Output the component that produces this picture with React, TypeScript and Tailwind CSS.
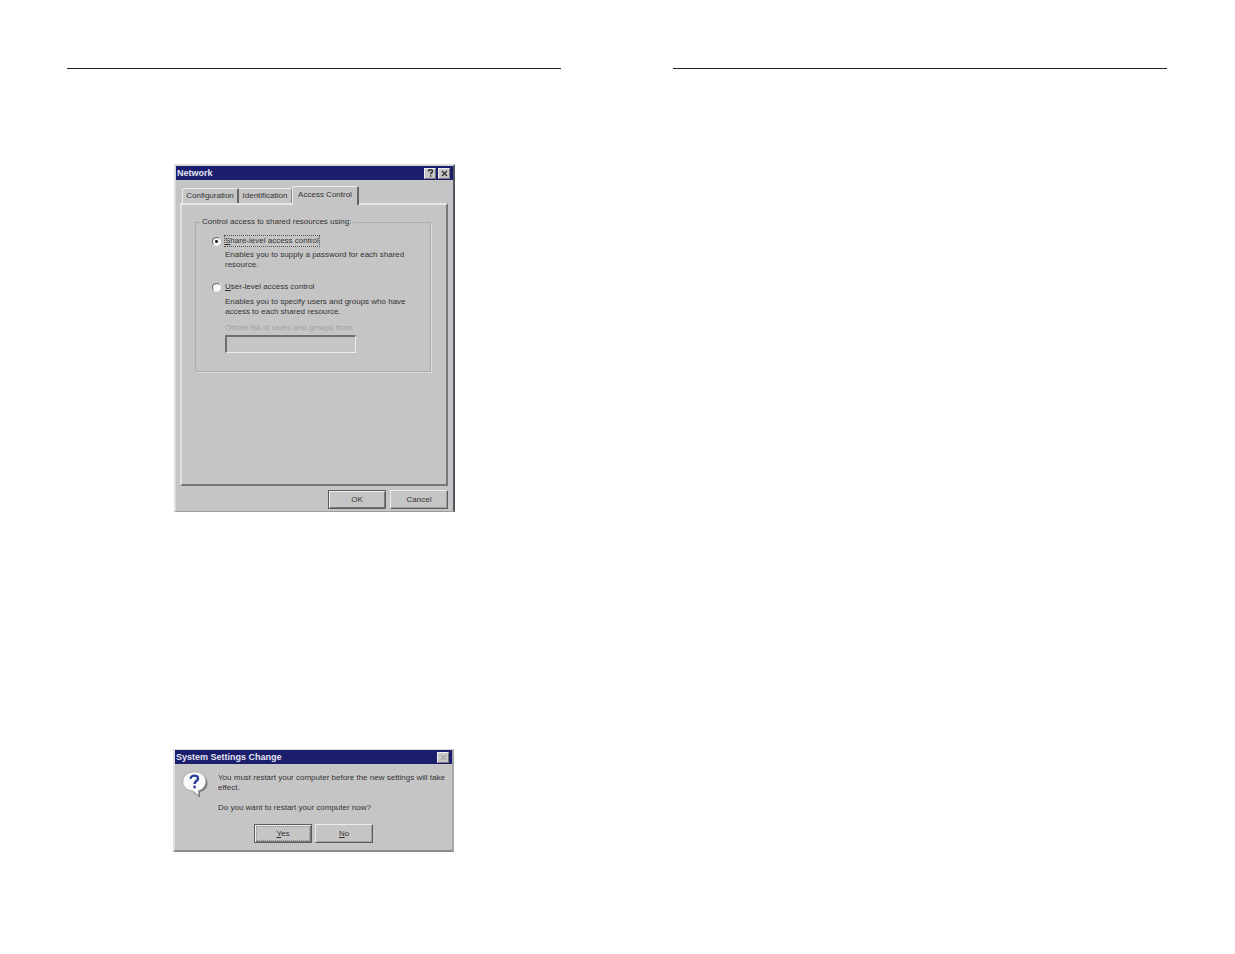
import { useState } from 'react';
import type { ReactNode } from 'react';

function TitleBar({ id, title, children }: { id: string; title: string; children: ReactNode }) {
  return (
    <header className="flex h-[14px] items-center justify-between bg-[#1b1f6b] pr-[3px] pl-[1px]">
      <h2 id={id} className="text-[9px] leading-[10px] font-bold text-[#e4e4f4]">
        {title}
      </h2>
      <div className="flex gap-[2px]">{children}</div>
    </header>
  );
}

const captionButton =
  'flex h-[11px] w-[12px] items-center justify-center border border-t-[#efefef] border-l-[#efefef] border-r-[#777777] border-b-[#777777] bg-[#c8c6c9]';

function CloseGlyph() {
  return (
    <svg viewBox="0 0 7 7" className="size-[7px]" fill="none" stroke="currentColor" strokeWidth="1.4" aria-hidden="true">
      <path d="M1 1 6 6M6 1 1 6" />
    </svg>
  );
}

function HelpGlyph() {
  return (
    <svg viewBox="0 0 7 8" className="h-[8px] w-[7px]" fill="none" stroke="currentColor" strokeWidth="1.5" aria-hidden="true">
      <path d="M1.5 2.5C1.5.3 5.5.3 5.5 2.4 5.5 3.6 3.6 3.6 3.6 5.2M3.6 6.2V7.7" />
    </svg>
  );
}

function PushButton({ isDefault = false, focused = false, children }: { isDefault?: boolean; focused?: boolean; children: ReactNode }) {
  return (
    <button
      type="button"
      className={
        isDefault
          ? 'h-[19px] w-[58px] border border-[#5c5c5c] bg-[#c6c5c6] p-[1px] text-[#333333] shadow-[inset_1px_1px_0_#ededed,inset_-1px_-1px_0_#777777]'
          : 'h-[19px] w-[58px] border border-t-[#ededed] border-r-[#5c5c5c] border-b-[#5c5c5c] border-l-[#ededed] bg-[#c6c5c6] p-[1px] text-[#333333] shadow-[inset_-1px_-1px_0_#a0a0a0]'
      }
    >
      <span
        className={
          focused
            ? 'flex h-full items-center justify-center border border-dotted border-[#8c8c8c]'
            : 'flex h-full items-center justify-center'
        }
      >
        {children}
      </span>
    </button>
  );
}

const radio =
  'size-[9px] shrink-0 appearance-none rounded-full border border-t-[#666666] border-r-[#eeeeee] border-b-[#eeeeee] border-l-[#666666] bg-[#f8f8f8] checked:bg-[radial-gradient(circle,#222222_1px,#f8f8f8_2px)]';

function NetworkDialog() {
  const [mode, setMode] = useState('share');
  return (
    <section
      aria-labelledby="network-title"
      className="mt-[95px] ml-[107px] w-[281px] border-2 border-b border-t-[#dadada] border-r-[#555560] border-b-[#9b9b9b] border-l-[#dedede] bg-[#c6c5c6]"
    >
      <TitleBar id="network-title" title="Network">
        <button type="button" aria-label="Help" className={captionButton}>
          <HelpGlyph />
        </button>
        <button type="button" aria-label="Close" className={captionButton}>
          <CloseGlyph />
        </button>
      </TitleBar>
      <div className="pt-[6px] pr-[5px] pb-[2px] pl-[4px]">
        <div role="tablist" className="flex items-end pl-[2px]">
          <button type="button" role="tab" aria-selected="false" className="h-[15px] w-[57px] rounded-t-[2px] border-t border-r-2 border-l border-t-[#eeeeee] border-r-[#666666] border-l-[#eeeeee] whitespace-nowrap">
            Configuration
          </button>
          <button type="button" role="tab" aria-selected="false" className="h-[15px] w-[53px] rounded-t-[2px] border-t border-r border-t-[#eeeeee] border-r-[#888888] whitespace-nowrap">
            Identification
          </button>
          <button type="button" role="tab" aria-selected="true" className="relative -mb-[2px] h-[19px] w-[67px] rounded-t-[2px] border-t border-r-2 border-l border-t-[#eeeeee] border-r-[#666666] border-l-[#eeeeee] bg-[#c6c5c6] pb-[3px] whitespace-nowrap">
            Access Control
          </button>
        </div>
        <div role="tabpanel" className="h-[283px] border-2 border-t-[#e6e6e6] border-r-[#777777] border-b-[#777777] border-l-[#e2e2e2] pt-[12px] pr-[15px] pl-[13px]">
          <fieldset className="h-[155px] border border-[#adadad] px-[16px] shadow-[1px_1px_0_#dddddd]">
            <legend className="-ml-[12px] px-[2px]">Control access to shared resources using:</legend>
            <div className="mt-[8px] flex items-center gap-[3px]">
              <input id="share" type="radio" name="mode" className={radio} checked={mode === 'share'} onChange={() => setMode('share')} />
              <label htmlFor="share" className="border border-dotted border-[#555555]">
                <u>S</u>hare-level access control
              </label>
            </div>
            <p className="mt-[3px] pl-[13px]">
              Enables you to supply a password for each shared
              <br />
              resource.
            </p>
            <div className="mt-[12px] flex items-center gap-[4px]">
              <input id="user" type="radio" name="mode" className={radio} checked={mode === 'user'} onChange={() => setMode('user')} />
              <label htmlFor="user">
                <u>U</u>ser-level access control
              </label>
            </div>
            <p className="mt-[5px] pl-[13px]">
              Enables you to specify users and groups who have
              <br />
              access to each shared resource.
            </p>
            <div className="mt-[6px] flex flex-col gap-[2px] pl-[13px]">
              <label htmlFor="source" className="text-[#a0a0a0]">
                Obtain list of users and groups from:
              </label>
              <input
                id="source"
                type="text"
                disabled={mode === 'share'}
                className="h-[18px] w-[131px] border-t-2 border-r border-b border-l-2 border-t-[#6e6e6e] border-r-[#eeeeee] border-b-[#eeeeee] border-l-[#6e6e6e] bg-[#c6c5c6] px-[2px]"
              />
            </div>
          </fieldset>
        </div>
        <div className="mt-[4px] flex justify-end gap-[4px]">
          <PushButton isDefault>OK</PushButton>
          <PushButton>Cancel</PushButton>
        </div>
      </div>
    </section>
  );
}

function RestartDialog() {
  return (
    <section
      aria-labelledby="restart-title"
      className="mt-[237px] ml-[106px] w-[281px] border-2 border-t border-t-[#dadada] border-r-[#a8a8a8] border-b-[#8c8c8c] border-l-[#dedede] bg-[#c6c5c6]"
    >
      <TitleBar id="restart-title" title="System Settings Change">
        <button type="button" aria-label="Close" disabled className={`${captionButton} text-[#a8a8a8]`}>
          <CloseGlyph />
        </button>
      </TitleBar>
      <div className="flex gap-[10px] pt-[7px] pl-[7px]">
        <svg viewBox="0 0 26 27" className="h-[27px] w-[26px] shrink-0" aria-hidden="true">
          <path d="M14 3C21 3 25.500 7 25.500 12.500 25.500 17 22 20 18 21V26.500L11.500 21.500Z" fill="#77777a" />
          <path d="M12.500.8C19 .8 23.800 4.900 23.800 10.500 23.800 15.500 20.500 18.700 16.500 19.600V24.800L11 20C5 19.600.8 15.800.8 10.500.8 5 6 .8 12.500.8Z" fill="#fafafa" stroke="#9999a0" strokeWidth=".7" />
          <path d="M8.800 7.800C8.400 3.500 16.300 3.600 16 7.600 15.800 10.200 12.600 10 12.600 13" fill="none" stroke="#293f91" strokeWidth="2.400" />
          <circle cx="12.600" cy="16" r="1.400" fill="#293f91" />
        </svg>
        <div className="pt-[2px]">
          <p>
            You must restart your computer before the new settings will take
            <br />
            effect.
          </p>
          <p className="mt-[10px]">Do you want to restart your computer now?</p>
        </div>
      </div>
      <div className="flex justify-center gap-[3px] pt-[11px] pb-[7px]">
        <PushButton isDefault focused>
          <span>
            <u>Y</u>es
          </span>
        </PushButton>
        <PushButton>
          <span>
            <u>N</u>o
          </span>
        </PushButton>
      </div>
    </section>
  );
}

export default function App() {
  return (
    <main className="grid min-h-screen grid-cols-2 gap-28 bg-white pt-[68px] pr-[68px] pb-[68px] pl-[67px] font-['Liberation_Sans',Arial,sans-serif] text-[8px] leading-[10px] text-[#333333]">
      <article className="border-t border-[#222222]">
        <NetworkDialog />
        <RestartDialog />
      </article>
      <article className="border-t border-[#222222]" />
    </main>
  );
}
